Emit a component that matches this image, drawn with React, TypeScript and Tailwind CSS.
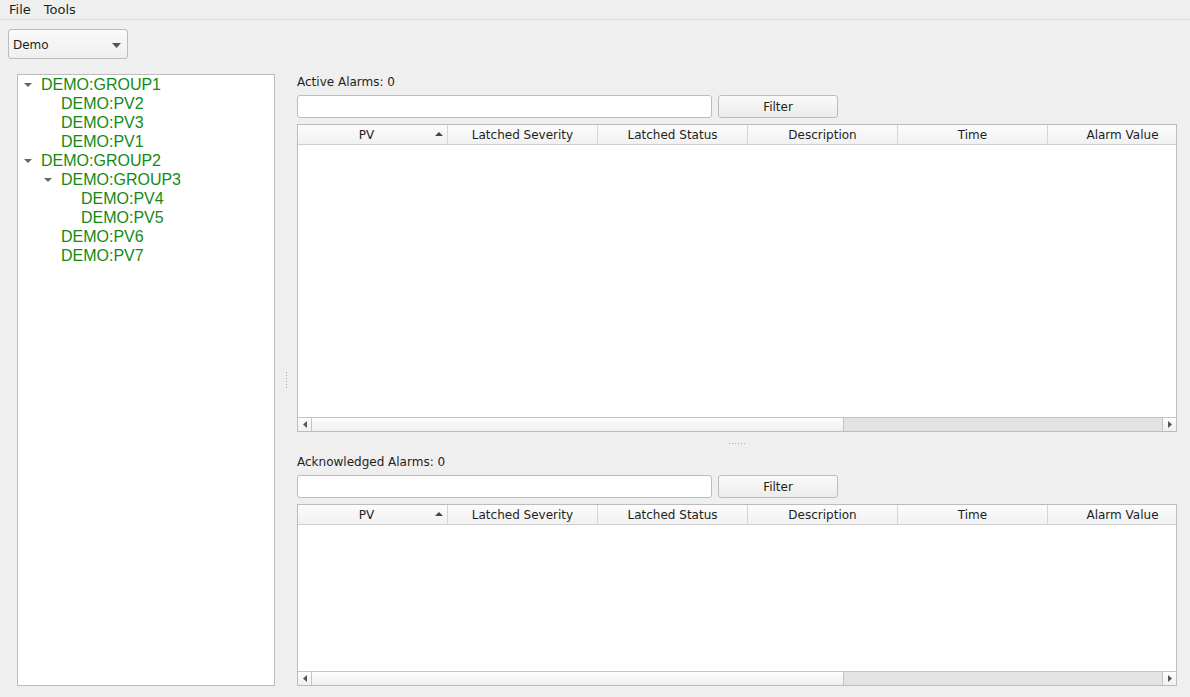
import React from "react";

const ui = { fontFamily: '"DejaVu Sans", sans-serif' };
const treeFont = { fontFamily: '"Liberation Sans", Arial, sans-serif' };

type Node = { label: string; depth: number; open?: boolean };

const tree: Node[] = [
  { label: "DEMO:GROUP1", depth: 0, open: true },
  { label: "DEMO:PV2", depth: 1 },
  { label: "DEMO:PV3", depth: 1 },
  { label: "DEMO:PV1", depth: 1 },
  { label: "DEMO:GROUP2", depth: 0, open: true },
  { label: "DEMO:GROUP3", depth: 1, open: true },
  { label: "DEMO:PV4", depth: 2 },
  { label: "DEMO:PV5", depth: 2 },
  { label: "DEMO:PV6", depth: 1 },
  { label: "DEMO:PV7", depth: 1 },
];

const columns = ["PV", "Latched Severity", "Latched Status", "Description", "Time", "Alarm Value"];

const DownArrow = () => (
  <svg width="9" height="5" viewBox="0 0 9 5">
    <path d="M0 0 L9 0 L4.5 5 Z" fill="#555" />
  </svg>
);

function HScroll() {
  return (
    <div className="flex h-[14px] border-t border-[#c4c4c4] bg-[#e3e3e3] shrink-0">
      <div className="w-[14px] flex items-center justify-center border-r border-[#c4c4c4] bg-gradient-to-b from-[#fdfdfd] to-[#f0f0f0]">
        <svg width="4" height="7" viewBox="0 0 4 7">
          <path d="M4 0 L4 7 L0 3.5 Z" fill="#555" />
        </svg>
      </div>
      <div className="w-[532px] border-r border-[#c4c4c4] bg-gradient-to-b from-[#fdfdfd] to-[#efefef]" />
      <div className="flex-1" />
      <div className="w-[14px] flex items-center justify-center border-l border-[#c4c4c4] bg-gradient-to-b from-[#fdfdfd] to-[#f0f0f0]">
        <svg width="4" height="7" viewBox="0 0 4 7">
          <path d="M0 0 L0 7 L4 3.5 Z" fill="#555" />
        </svg>
      </div>
    </div>
  );
}

function AlarmTable({ height }: { height: string }) {
  return (
    <div className={`${height} border border-[#bcbcbc] bg-white flex flex-col overflow-hidden`}>
      <div className="flex h-[20px] shrink-0 border-b border-[#cfcfcf] bg-gradient-to-b from-[#fcfcfc] to-[#f1f1f1] overflow-hidden">
        {columns.map((c, i) => (
          <div
            key={c}
            className={`relative w-[150px] shrink-0 flex items-center justify-center border-r border-[#d6d6d6] text-[12px] text-[#1e1e1e] ${i === 0 ? "pr-[12px]" : ""}`}
          >
            {c}
            {i === 0 && (
              <svg className="absolute right-[4px] top-[7px]" width="8" height="4" viewBox="0 0 8 4">
                <path d="M0 4 L8 4 L4 0 Z" fill="#444" />
              </svg>
            )}
          </div>
        ))}
      </div>
      <div className="flex-1" />
      <HScroll />
    </div>
  );
}

function AlarmSection({ title, tableHeight }: { title: string; tableHeight: string }) {
  return (
    <div className="flex flex-col">
      <div className="h-[14px] leading-[14px] pt-[1px] text-[12px] text-[#1e1e1e]">{title}</div>
      <div className="flex gap-[6px] mt-[7px]">
        <div className="w-[415px] h-[23px] rounded-[3px] border border-[#bcbcbc] bg-white" />
        <button className="w-[120px] h-[23px] rounded-[3px] border border-[#bcbcbc] bg-gradient-to-b from-[#fafafa] to-[#ececec] text-[12px] text-[#1e1e1e]">
          Filter
        </button>
      </div>
      <div className="mt-[6px]">
        <AlarmTable height={tableHeight} />
      </div>
    </div>
  );
}

export default function App() {
  return (
    <div className="w-[1190px] h-[697px] bg-[#efefef] flex flex-col overflow-hidden" style={ui}>
      <div className="h-[20px] flex items-center gap-[13px] px-[9px] border-b border-[#dadada] text-[13px] text-[#1e1e1e]">
        <span>File</span>
        <span>Tools</span>
      </div>
      <div className="px-[8px] pt-[9px]">
        <div className="w-[120px] h-[30px] rounded-[3px] border border-[#bcbcbc] bg-gradient-to-b from-[#fafafa] to-[#efefef] flex items-center justify-between pl-[4px] pr-[6px] pt-[2px] text-[12px] text-[#1e1e1e]">
          <span>Demo</span>
          <DownArrow />
        </div>
      </div>
      <div className="flex mt-[15px] pl-[17px]">
        <div className="w-[258px] h-[612px] border border-[#bcbcbc] bg-white" style={treeFont}>
          {tree.map((n) => (
            <div
              key={n.label}
              className="h-[19px] flex items-center text-[16px] text-[#138a13]"
              style={{ paddingLeft: 3 + n.depth * 20 }}
            >
              <span className="w-[20px] flex items-center justify-start pl-[3px]">
                {n.open && (
                  <svg width="8" height="4" viewBox="0 0 8 4">
                    <path d="M0 0 L8 0 L4 4 Z" fill="#666" />
                  </svg>
                )}
              </span>
              <span>{n.label}</span>
            </div>
          ))}
        </div>
        <div className="w-[22px] flex items-center justify-center">
          <div className="flex flex-col gap-[2px]">
            {[0, 1, 2, 3, 4, 5].map((i) => (
              <div key={i} className="w-[1px] h-[1px] bg-[#a8a8a8]" />
            ))}
          </div>
        </div>
        <div className="w-[880px] flex flex-col">
          <AlarmSection title="Active Alarms: 0" tableHeight="h-[308px]" />
          <div className="h-[22px] flex items-center justify-center">
            <div className="flex gap-[2px]">
              {[0, 1, 2, 3, 4, 5].map((i) => (
                <div key={i} className="w-[1px] h-[1px] bg-[#a8a8a8]" />
              ))}
            </div>
          </div>
          <AlarmSection title="Acknowledged Alarms: 0" tableHeight="h-[182px]" />
        </div>
      </div>
    </div>
  );
}
